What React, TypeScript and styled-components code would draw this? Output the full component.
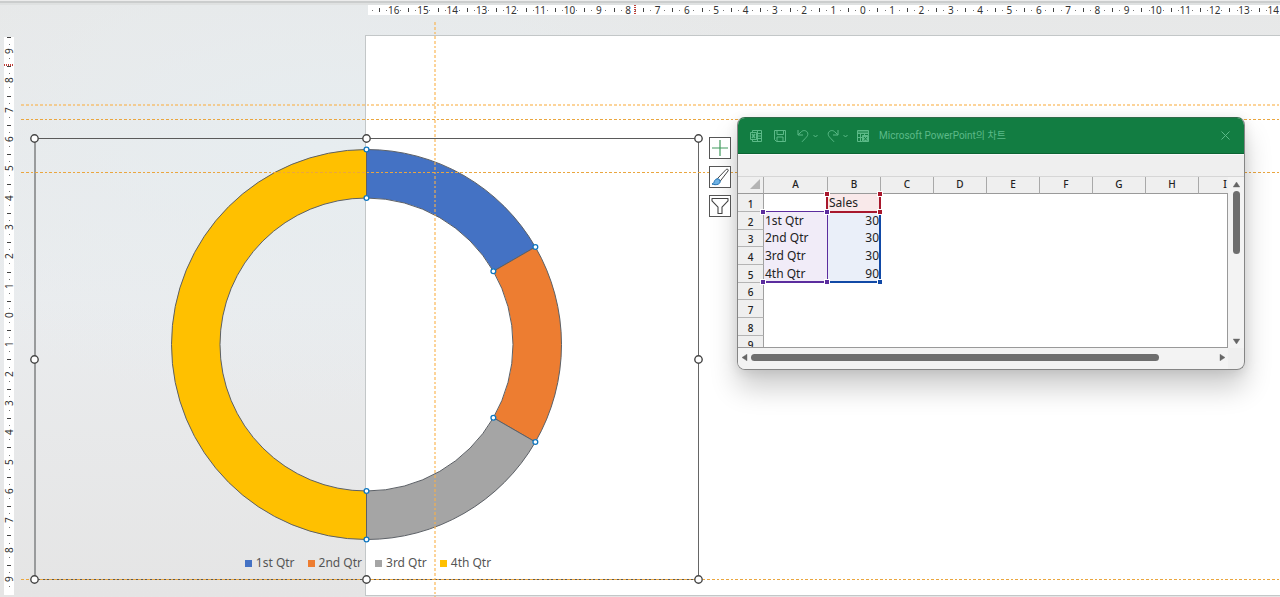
import React from "react";
import styled, { createGlobalStyle, css } from "styled-components";

const GlobalStyle = createGlobalStyle`
  *, *::before, *::after { box-sizing: border-box; }
  body {
    margin: 0;
    font-family: "Noto Sans", "Noto Sans CJK KR", sans-serif;
    color: #222;
  }
  button { padding: 0; border: 0; background: none; font: inherit; color: inherit; }
`;

/* ---------- Workspace ---------- */

const Editor = styled.main`
  display: flex;
  flex-direction: column;
  gap: 5px;
  min-height: 100vh;
  overflow: hidden;
  background:
    radial-gradient(ellipse 480px 260px at 320px 150px, #e7edf0 0%, rgba(231, 237, 240, 0) 100%),
    linear-gradient(180deg, #e7e8e8 0%, #eaecee 50%, #e5e5e5 100%);
`;

const TopEdge = styled.div`
  height: 5px;
  margin-bottom: -5px;
  background: linear-gradient(180deg, #ececec 1px, #cbcdcd 1px 3px, #dfe1e1 3px);
`;

const Body = styled.div`
  display: flex;
  flex: 1;
  gap: 6px;
  padding-left: 4px;
`;

const Canvas = styled.section`
  position: relative;
  flex: 1;
`;

const Slide = styled.div`
  position: absolute;
  left: 345px;
  right: 0;
  top: 15px;
  height: 561px;
  background: #fff;
  border: 1px solid #c3c7c8;
  border-right: 0;
`;

/* ---------- Rulers ---------- */

const HorizontalRuler = styled.div`
  position: relative;
  display: flex;
  height: 10px;
  margin-left: 368px;
  background: #fff;
`;

const VerticalRuler = styled.div`
  position: relative;
  width: 10px;
  height: 558px;
  margin-top: 17px;
  background: #fff;
`;

const Lead = styled.div`
  flex: none;
  display: flex;
  align-items: center;
  width: 11px;
  padding-left: 4px;
`;

const Scale = styled.div<{ $vertical?: boolean }>`
  flex: none;
  display: grid;
  ${(p) =>
    p.$vertical
      ? css`
          grid-template-rows: repeat(19, 1fr);
          height: 557px;
        `
      : css`
          grid-template-columns: repeat(31, 1fr);
          width: 909px;
        `}
`;

const Unit = styled.div<{ $vertical?: boolean }>`
  position: relative;
  display: flex;
  flex-direction: ${(p) => (p.$vertical ? "column" : "row")};
  align-items: center;
  justify-content: center;
  padding-right: ${(p) => (p.$vertical ? "1px" : "0")};
  font-size: 10px;
  line-height: 10px;
  color: #333;

  span {
    width: ${(p) => (p.$vertical ? "10px" : "13px")};
    height: ${(p) => (p.$vertical ? "13px" : "10px")};
    display: flex;
    align-items: center;
    justify-content: center;
    ${(p) => p.$vertical && "writing-mode: vertical-rl; transform: rotate(180deg);"}
  }

  &::before {
    content: "";
    position: absolute;
    background: #444;
    ${(p) => (p.$vertical ? "top: 0; left: 3px; width: 4px; height: 1px;" : "left: 0; top: 3px; width: 1px; height: 4px;")}
  }
`;

const Dot = styled.i`
  width: 1px;
  height: 1px;
  background: #777;
`;

const Cursor = styled.div<{ $vertical?: boolean }>`
  position: absolute;
  ${(p) =>
    p.$vertical
      ? "left: 0; top: 27px; width: 10px; height: 2px; background: repeating-linear-gradient(90deg, #c0403a 0 1px, transparent 1px 2px);"
      : "top: 0; left: 266px; height: 10px; width: 2px; background: repeating-linear-gradient(180deg, #c0403a 0 1px, transparent 1px 2px);"}
`;

/* ---------- Guides ---------- */

const dashes = (dir: string, c: string) =>
  `repeating-linear-gradient(${dir}, ${c} 0 3px, transparent 3px 5px, ${c} 5px 8px, transparent 8px 10px, ${c} 10px 12px, transparent 12px 14px)`;

const HGuide = styled.div<{ $top: number; $soft?: boolean }>`
  position: absolute;
  left: 1px;
  right: 0;
  top: ${(p) => p.$top}px;
  height: ${(p) => (p.$soft ? 2 : 1)}px;
  background: ${(p) => dashes("90deg", p.$soft ? "rgba(250, 176, 70, .55)" : "#eaa63f")};
`;

const VGuide = styled.div`
  position: absolute;
  left: 414px;
  top: 2px;
  bottom: 0;
  width: 2px;
  background: ${dashes("180deg", "rgba(250, 176, 70, .55)")};
`;

/* ---------- Chart ---------- */

const ChartFrame = styled.figure`
  position: absolute;
  left: 14px;
  top: 118px;
  width: 665px;
  height: 442px;
  margin: 0;
  display: flex;
  flex-direction: column;
  align-items: center;
  border: 1px solid #5a5a5a;
  border-left: 2px solid #999b9c;
  border-right-color: #666;

  > svg {
    display: block;
    margin-top: 6px;
  }
`;

const Legend = styled.figcaption`
  display: flex;
  gap: 13px;
  margin-top: 8px;
  padding-left: 2px;
`;

const LegendItem = styled.span<{ $color: string }>`
  display: flex;
  align-items: center;
  gap: 4px;
  font-size: 12px;
  line-height: 20px;
  color: #555;

  &::before {
    content: "";
    width: 7px;
    height: 7px;
    background: ${(p) => p.$color};
  }
`;

const HandleLayer = styled.div`
  position: absolute;
  left: 15px;
  top: 119px;
  width: 664px;
  height: 441px;
`;

const Handle = styled.i<{ $x: string; $y: string }>`
  position: absolute;
  left: ${(p) => p.$x};
  top: ${(p) => p.$y};
  width: 9px;
  height: 9px;
  margin: -5px;

  svg { display: block; }
`;

const SideButtons = styled.div`
  position: absolute;
  left: 689px;
  top: 117px;
  display: flex;
  flex-direction: column;
  gap: 7px;
`;

const SideButton = styled.button`
  width: 22px;
  height: 22px;
  border: 1px solid #555;
  background: #fff;

  svg { display: block; }
`;

const slices = [
  { label: "1st Qtr", value: 30, color: "#4472c4" },
  { label: "2nd Qtr", value: 30, color: "#ed7d31" },
  { label: "3rd Qtr", value: 30, color: "#a5a5a5" },
  { label: "4th Qtr", value: 90, color: "#ffc000" },
];

const CENTER = 199.5;
const OUTER = 195;
const INNER = 146.5;

const point = (r: number, turn: number) => {
  const a = turn * 2 * Math.PI;
  return [CENTER + r * Math.sin(a), CENTER - r * Math.cos(a)];
};

function Doughnut() {
  const total = slices.reduce((s, d) => s + d.value, 0);
  let start = 0;
  const arcs = slices.map((s) => {
    const from = start / total;
    start += s.value;
    return { ...s, from, to: start / total };
  });
  return (
    <svg width="400" height="400" viewBox="0 0 400 400" role="img" aria-label="Sales">
      {arcs.map((a) => {
        const [x1, y1] = point(OUTER, a.from);
        const [x2, y2] = point(OUTER, a.to);
        const [x3, y3] = point(INNER, a.to);
        const [x4, y4] = point(INNER, a.from);
        return (
          <path
            key={a.label}
            d={`M${x1} ${y1}A${OUTER} ${OUTER} 0 0 1 ${x2} ${y2}L${x3} ${y3}A${INNER} ${INNER} 0 0 0 ${x4} ${y4}Z`}
            fill={a.color}
            stroke="#5c6066"
            strokeWidth="1"
          />
        );
      })}
      {arcs.map((a) =>
        [OUTER, INNER].map((r) => {
          const [x, y] = point(r, a.from);
          return <circle key={a.label + r} cx={x} cy={y} r="2.4" fill="#fff" stroke="#0f77c0" strokeWidth="1.3" />;
        })
      )}
    </svg>
  );
}

const edges = ["0%", "50%", "100%"];

function ChartHandles() {
  return (
    <HandleLayer>
      {edges.map((y) =>
        edges
          .filter((x) => !(x === "50%" && y === "50%"))
          .map((x) => (
            <Handle key={x + y} $x={x} $y={y}>
              <svg width="9" height="9" viewBox="0 0 9 9">
                <circle cx="4.5" cy="4.5" r="3.7" fill="#fff" stroke="#444" strokeWidth="1.4" />
              </svg>
            </Handle>
          ))
      )}
    </HandleLayer>
  );
}

/* ---------- Data window ---------- */

const DataWindow = styled.section`
  position: absolute;
  left: 717px;
  top: 97px;
  width: 508px;
  display: flex;
  flex-direction: column;
  overflow: hidden;
  border: 1px solid #858585;
  border-top-color: #2f6b49;
  border-radius: 8px;
  background: #efefef;
`;

const WindowShadow = styled.div`
  position: absolute;
  left: 717px;
  top: 97px;
  width: 508px;
  height: 253px;
  border-radius: 8px;
  box-shadow: 0 18px 28px rgba(0, 0, 0, 0.2), 0 2px 12px rgba(0, 0, 0, 0.1);
`;

const TitleBar = styled.header`
  display: flex;
  align-items: center;
  height: 36px;
  padding: 0 11px;
  background: #127d42;
  border-bottom: 1px solid #0c6434;
  color: #5cba88;
`;

const Tool = styled.button<{ $gap?: number }>`
  display: flex;
  margin-right: ${(p) => p.$gap ?? 0}px;
`;

const Title = styled.h1`
  flex: 1;
  margin: 0;
  font-family: Roboto, "Noto Sans CJK KR", sans-serif;
  font-size: 10px;
  line-height: 16px;
  font-weight: 400;
`;

const Ribbon = styled.div`
  height: 23px;
  border-top: 1px solid #fafafa;
  border-bottom: 1px solid #d6d6d6;
`;

const SheetArea = styled.div`
  display: grid;
  grid-template-columns: 1fr 16px;
  grid-template-rows: 171px 21px;
`;

const Viewport = styled.div`
  position: relative;
  overflow: hidden;
  border-bottom: 1px solid #999;

  &::after {
    content: "";
    position: absolute;
    right: 0;
    top: 16px;
    bottom: 0;
    width: 1px;
    background: #999;
  }
`;

const Sheet = styled.table`
  table-layout: fixed;
  width: 514px;
  border-collapse: separate;
  border-spacing: 0;

  th {
    padding: 0;
    background: #efefef;
    font-size: 10px;
    line-height: 14px;
    font-weight: 500;
    color: #222;
  }
  thead tr { height: 17px; }
  thead th {
    padding-bottom: 2px;
    border-right: 1px solid #a9a9a9;
    border-bottom: 1px solid #9a9a9a;
  }
  tbody tr { height: 18px; }
  tbody tr:nth-child(3n) { height: 17px; }
  tbody th {
    padding-top: 2px;
    border-right: 1px solid #a0a0a0;
    border-bottom: 1px solid #b4b4b4;
  }
`;

const Col = styled.col<{ $w: number }>`
  width: ${(p) => p.$w}px;
`;

const Cell = styled.td<{ $tone?: string; $right?: boolean }>`
  padding: 0 2px 1px 1px;
  font-size: 12px;
  line-height: 16px;
  white-space: nowrap;
  background: ${(p) => p.$tone ?? "#fff"};
  text-align: ${(p) => (p.$right ? "right" : "left")};
`;

const Corner = styled.svg`
  display: block;
  margin-left: auto;
`;

const Range = styled.div<{ $x: number; $y: number; $w: number; $h: number; $color: string; $sides: string }>`
  position: absolute;
  left: ${(p) => p.$x}px;
  top: ${(p) => p.$y}px;
  width: ${(p) => p.$w}px;
  height: ${(p) => p.$h}px;
  border: 2px solid ${(p) => p.$color};
  border-width: ${(p) => p.$sides};
`;

const Grip = styled.i<{ $x: number; $y: number; $color: string }>`
  position: absolute;
  left: ${(p) => p.$x}px;
  top: ${(p) => p.$y}px;
  width: 4px;
  height: 4px;
  background: ${(p) => p.$color};
  outline: 1px solid #fff;
`;

const ScrollBar = styled.div<{ $vertical?: boolean }>`
  display: flex;
  flex-direction: ${(p) => (p.$vertical ? "column" : "row")};
  align-items: center;
  justify-content: space-between;
  gap: 3px;
  background: #f3f3f3;
  padding: ${(p) => (p.$vertical ? "4px 0 3px" : "0 2px 3px 3px")};
`;

const Track = styled.div`
  flex: 1;
`;

const Thumb = styled.div<{ $w: number; $h: number }>`
  width: ${(p) => p.$w}px;
  height: ${(p) => p.$h}px;
  border-radius: 4px;
  background: #6e6e6e;
`;

const Arrow = styled.button<{ $turn: number }>`
  display: flex;
  width: 7px;
  height: 7px;

  svg { transform: rotate(${(p) => p.$turn}deg); }
`;

function ScrollArrow({ turn, label }: { turn: number; label: string }) {
  return (
    <Arrow $turn={turn} aria-label={label}>
      <svg width="7" height="7" viewBox="0 0 7 7">
        <path d="M3.5 1 6.8 6H.2Z" fill="#666" stroke="#666" strokeLinejoin="round" strokeWidth=".4" />
      </svg>
    </Arrow>
  );
}

const PURPLE = "#5b2d9e";
const RED = "#a8182d";
const BLUE = "#1149a6";

const rows: Array<[string, string]> = [
  ["", "Sales"],
  ["1st Qtr", "30"],
  ["2nd Qtr", "30"],
  ["3rd Qtr", "30"],
  ["4th Qtr", "90"],
  ["", ""],
  ["", ""],
  ["", ""],
  ["", ""],
];

const columns = ["A", "B", "C", "D", "E", "F", "G", "H", "I"];

function DataSheet() {
  return (
    <Viewport>
      <Sheet>
        <colgroup>
          <Col $w={26} />
          <Col $w={64} />
          {columns.slice(1).map((c) => (
            <Col key={c} $w={53} />
          ))}
        </colgroup>
        <thead>
          <tr>
            <th aria-label="Select all">
              <Corner width="14" height="12" viewBox="0 0 14 12">
                <path d="M11 1v10H1Z" fill="#b3b3b3" />
              </Corner>
            </th>
            {columns.map((c) => (
              <th key={c} scope="col">{c}</th>
            ))}
          </tr>
        </thead>
        <tbody>
          {rows.map(([a, b], i) => {
            const data = i > 0 && i < 5;
            return (
              <tr key={i}>
                <th scope="row">{i + 1}</th>
                <Cell $tone={data ? "#f1ecf8" : undefined}>{a}</Cell>
                <Cell $tone={data ? "#eaeff9" : i === 0 ? "#f9e9ea" : undefined} $right={data}>{b}</Cell>
                {columns.slice(2).map((c) => (
                  <Cell key={c} />
                ))}
              </tr>
            );
          })}
        </tbody>
      </Sheet>
      <Range $x={26} $y={34} $w={64} $h={72} $color={PURPLE} $sides="1px 1px 2px 0" />
      <Range $x={90} $y={35} $w={53} $h={71} $color={BLUE} $sides="0 2px 2px 0" />
      <Range $x={88} $y={18} $w={55} $h={18} $color={RED} $sides="0 2px 2px 2px" />
      <Grip $x={87} $y={15} $color={RED} />
      <Grip $x={140} $y={15} $color={RED} />
      <Grip $x={140} $y={33} $color={RED} />
      <Grip $x={87} $y={33} $color={PURPLE} />
      <Grip $x={23} $y={33} $color={PURPLE} />
      <Grip $x={23} $y={103} $color={PURPLE} />
      <Grip $x={87} $y={103} $color={PURPLE} />
      <Grip $x={140} $y={103} $color={BLUE} />
    </Viewport>
  );
}

const line = { fill: "none", stroke: "currentColor", strokeWidth: 1 } as const;

function Chevron() {
  return (
    <svg width="5" height="4" viewBox="0 0 5 4" {...line}>
      <path d="M.5 1 2.5 3l2-2" />
    </svg>
  );
}

function ExcelWindow() {
  return (
    <DataWindow aria-label="Chart data">
      <TitleBar>
        <Tool $gap={10} aria-label="Excel">
          <svg width="14" height="14" viewBox="0 0 14 14" {...line}>
            <path d="M3.500 3V1.500h9v11h-9V11M8.500 1.500v11M3.500 4.500h9M8.500 7h4M8.500 9.500h4" />
            <path d="M1.500 3.500h6v7h-6Z" fill="#127d42" />
            <path d="m3 5 3 4M6 5 3 9" strokeWidth="1.400" />
          </svg>
        </Tool>
        <Tool $gap={10} aria-label="Save">
          <svg width="14" height="14" viewBox="0 0 14 14" {...line}>
            <path d="M1.500 1.500h11v11h-9l-2-2ZM4 1.500v4h6.500v-4M4 12.500v-4.500h6v4.500" />
          </svg>
        </Tool>
        <Tool $gap={4} aria-label="Undo">
          <svg width="12" height="14" viewBox="0 0 12 14" {...line}>
            <path d="M1 1v5h5M1.300 5.700 4.500 2.600C7 .4 11 2 10.800 5.300 10.700 7 9.800 7.800 5 12.800" />
          </svg>
        </Tool>
        <Tool $gap={9} aria-label="Undo list"><Chevron /></Tool>
        <Tool $gap={4} aria-label="Redo">
          <svg width="12" height="14" viewBox="0 0 12 14" {...line}>
            <path d="M11 1v5H6M10.700 5.700 7.500 2.600C5 .4 1 2 1.200 5.300 1.300 7 2.200 7.800 7 12.800" />
          </svg>
        </Tool>
        <Tool $gap={8} aria-label="Redo list"><Chevron /></Tool>
        <Tool $gap={9} aria-label="Edit data in Excel">
          <svg width="14" height="14" viewBox="0 0 14 14" {...line}>
            <path d="M6 12.500H1.500v-11h11V6M1.500 4.500h11M1.500 3h11M1.500 8.500H6M4.500 4.500v8M8.500 4.500V6" />
            <path d="M6.500 6.500h6v6h-6Z" fill="currentColor" />
            <path d="m8 8 3 3.500M11 8l-3 3.500" stroke="#127d42" />
          </svg>
        </Tool>
        <Title>Microsoft PowerPoint의 차트</Title>
        <Tool $gap={3} aria-label="Close">
          <svg width="9" height="9" viewBox="0 0 9 9" {...line}>
            <path d="m.5.5 8 8M8.500.5l-8 8" />
          </svg>
        </Tool>
      </TitleBar>
      <Ribbon />
      <SheetArea>
        <DataSheet />
        <ScrollBar $vertical>
          <ScrollArrow turn={0} label="Scroll up" />
          <Track><Thumb $w={7} $h={63} /></Track>
          <ScrollArrow turn={180} label="Scroll down" />
        </ScrollBar>
        <ScrollBar>
          <ScrollArrow turn={-90} label="Scroll left" />
          <Track><Thumb $w={408} $h={7} /></Track>
          <ScrollArrow turn={90} label="Scroll right" />
        </ScrollBar>
      </SheetArea>
    </DataWindow>
  );
}

const ticks = (max: number, last: number) =>
  Array.from({ length: max + last + 1 }, (_, i) => Math.abs(max - i));

function Ruler({ vertical, max, last }: { vertical?: boolean; max: number; last: number }) {
  return (
    <Scale $vertical={vertical}>
      {ticks(max, last).map((n, i) => (
        <Unit key={i} $vertical={vertical}>
          <Dot />
          <span>{n}</span>
          <Dot />
        </Unit>
      ))}
    </Scale>
  );
}

export default function App() {
  return (
    <>
      <GlobalStyle />
      <Editor>
        <TopEdge />
        <HorizontalRuler>
          <Lead><Dot /></Lead>
          <Ruler max={16} last={14} />
          <Cursor />
        </HorizontalRuler>
        <Body>
          <VerticalRuler>
            <Ruler vertical max={9} last={9} />
            <Cursor $vertical />
          </VerticalRuler>
          <Canvas>
            <Slide />
            <ChartFrame>
              <Doughnut />
              <Legend>
                {slices.map((s) => (
                  <LegendItem key={s.label} $color={s.color}>{s.label}</LegendItem>
                ))}
              </Legend>
            </ChartFrame>
            <HGuide $top={84} $soft />
            <HGuide $top={99} />
            <HGuide $top={152} />
            <HGuide $top={559} />
            <VGuide />
            <ChartHandles />
            <WindowShadow />
            <SideButtons>
              <SideButton aria-label="Chart elements">
                <svg width="20" height="20" viewBox="0 0 20 20" fill="none" stroke="#3f9a5c" strokeWidth="1.200">
                  <path d="M10 2v16M2 10h16" />
                </svg>
              </SideButton>
              <SideButton aria-label="Chart styles">
                <svg width="20" height="20" viewBox="0 0 20 20" fill="none" stroke="#444" strokeWidth="1">
                  <path d="M7.500 11.500 16.200 2.400c1-.9 2.600.2 1.900 1.500L10.300 14Z" fill="#fff" />
                  <path d="M2 17c2-.4 1.800-2 2.800-3.600 1.200-2 3.600-2 4.800-.6 1.200 1.500.5 3.500-1.200 4.300C6.300 18 4 17.800 2 17Z" fill="#6fb3e6" stroke="#1d6fb0" />
                </svg>
              </SideButton>
              <SideButton aria-label="Chart filters">
                <svg width="20" height="20" viewBox="0 0 20 20" fill="none" stroke="#444" strokeWidth="1.100">
                  <path d="M2 2.500h16v2.300l-6 6.400v6.300H8v-6.300L2 4.800Z" strokeLinejoin="round" />
                </svg>
              </SideButton>
            </SideButtons>
            <ExcelWindow />
          </Canvas>
        </Body>
      </Editor>
    </>
  );
}
